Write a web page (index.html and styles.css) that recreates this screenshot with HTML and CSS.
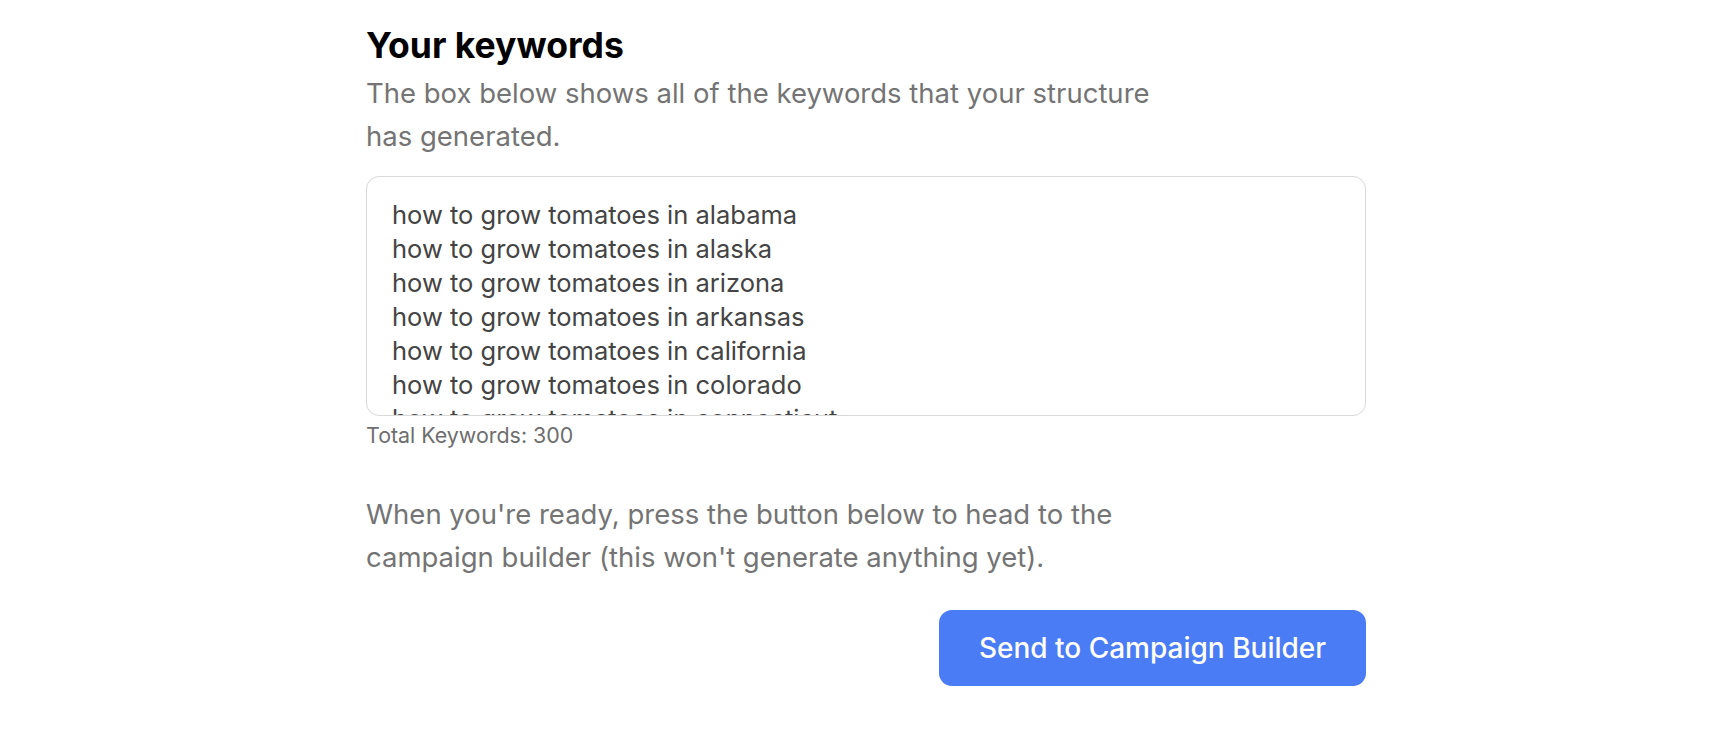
FILE: index.html
```html
<!DOCTYPE html>
<html lang="en">
<head>
<meta charset="utf-8">
<title>Your keywords</title>
<link rel="stylesheet" href="styles.css">
</head>
<body>
<main class="section">
  <h2 class="title">Your keywords</h2>
  <p class="lead">The box below shows all of the keywords that your structure has generated.</p>
  <textarea class="keywords" readonly>how to grow tomatoes in alabama
how to grow tomatoes in alaska
how to grow tomatoes in arizona
how to grow tomatoes in arkansas
how to grow tomatoes in california
how to grow tomatoes in colorado
how to grow tomatoes in connecticut
how to grow tomatoes in delaware
how to grow tomatoes in florida
how to grow tomatoes in georgia
how to grow tomatoes in hawaii
how to grow tomatoes in idaho</textarea>
  <div class="count">Total Keywords: 300</div>
  <p class="lead note">When you're ready, press the button below to head to the campaign builder (this won't generate anything yet).</p>
  <div class="actions">
    <button class="btn" type="button">Send to Campaign Builder</button>
  </div>
</main>
</body>
</html>
```
FILE: styles.css
```css
html, body {
  margin: 0;
  padding: 0;
  background: #ffffff;
}
body {
  font-family: Inter, "Noto Sans", sans-serif;
}
.section {
  width: 1000px;
  margin-left: 366px;
  padding-top: 24px;
  display: flex;
  flex-direction: column;
}
.title {
  margin: 0;
  font-size: 35.5px;
  line-height: 44px;
  font-weight: 700;
  color: #000;
}
.lead {
  margin: 4px 0 0;
  max-width: 800px;
  font-size: 27.5px;
  line-height: 42.7px;
  color: #747474;
}
.keywords {
  margin-top: 19px;
  box-sizing: border-box;
  width: 1000px;
  height: 240px;
  border: 1.5px solid #d9d9d9;
  border-radius: 13px;
  padding: 21px 25px;
  font-family: Inter, "Noto Sans", sans-serif;
  font-size: 25.5px;
  line-height: 34px;
  color: #444;
  resize: none;
  overflow: hidden;
  scrollbar-width: none;
  outline: none;
  background: #fff;
}
.count {
  margin-top: 4px;
  font-size: 21.4px;
  line-height: 30px;
  color: #6e6e6e;
}
.note {
  margin-top: 43px;
}
.actions {
  display: flex;
  justify-content: flex-end;
  margin-top: 31px;
}
.btn {
  height: 76px;
  width: 427px;
  border: none;
  border-radius: 13px;
  background: #4a7cf6;
  color: #fff;
  font-family: Inter, "Noto Sans", sans-serif;
  font-size: 28px;
  font-weight: 500;
  padding: 0 30px;
}
```
